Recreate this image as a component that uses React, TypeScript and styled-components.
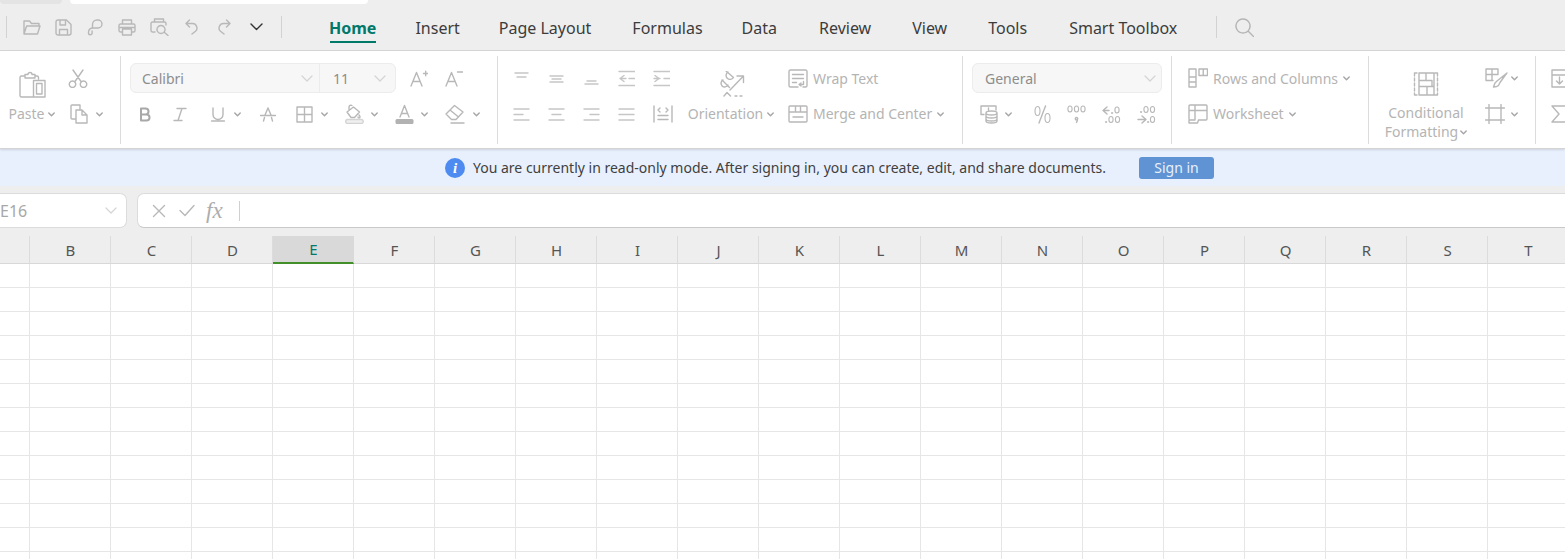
import React from "react";
import styled, { createGlobalStyle } from "styled-components";

const Global = createGlobalStyle`
  html, body { margin: 0; padding: 0; background: #fff; overflow: hidden; }
  body { font-family: "Noto Sans", "Open Sans", sans-serif; width: 1565px; height: 559px; }
  * { box-sizing: border-box; }
`;

const Page = styled.div`
  width: 1565px; height: 559px; overflow: hidden; display: flex; flex-direction: column; background: #fff;
`;
const TabStrip = styled.div`
  height: 4px; background: #eeeeee; display: flex; flex: none;
`;
const DocTab = styled.div<{ $active?: boolean; $w: number; $ml: number }>`
  width: ${p => p.$w}px; margin-left: ${p => p.$ml}px; height: 4px;
  border-radius: 0 0 6px 6px; background: ${p => (p.$active ? "#fff" : "#e4e4e4")};
`;
const MenuBar = styled.div`
  height: 47px; flex: none; background: #eeeeee; border-bottom: 1px solid #d6d6d6;
  display: flex; align-items: center; padding-left: 6px; position: relative;
`;
const BarSep = styled.div<{ $ml: number }>`
  width: 1px; height: 22px; background: #d2d2d2; margin-left: ${p => p.$ml}px; flex: none;
`;
const Slot = styled.div<{ $ml?: number; $w?: number }>`
  display: flex; align-items: center; flex: none;
  margin-left: ${p => p.$ml ?? 0}px;
  ${p => (p.$w ? `width: ${p.$w}px;` : "")}
`;
const Tabs = styled.div`
  display: flex; margin-left: 47px; height: 100%; align-items: center; padding-top: 2px;
`;
const Tab = styled.div<{ $active?: boolean; $ml: number }>`
  margin-left: ${p => p.$ml}px; font-size: 16px; line-height: 22px; white-space: nowrap; position: relative;
  color: ${p => (p.$active ? "#00786a" : "#3c3c3c")};
  font-weight: ${p => (p.$active ? 700 : 400)};
  ${p => (p.$active ? `&::after { content: ""; position: absolute; left: 1px; right: 0; bottom: -4px; height: 2px; background: #007a68; }` : "")}
`;
const Ribbon = styled.div`
  height: 98px; flex: none; background: #fff; display: flex; padding-top: 5px;
  border-bottom: 1px solid #d4d4d4; box-shadow: 0 1px 2px rgba(0,0,0,.12); position: relative; z-index: 1;
`;
const Group = styled.div<{ $w: number; $pl: number; $last?: boolean }>`
  width: ${p => p.$w}px; height: 88px; flex: none; display: flex; padding: 7px 0 0 ${p => p.$pl}px;
  ${p => (p.$last ? "" : "border-right: 1px solid #dcdcdc;")}
`;
const Stack = styled.div<{ $ml?: number }>`
  display: flex; flex-direction: column; gap: 6px; flex: none; margin-left: ${p => p.$ml ?? 0}px;
`;
const Row = styled.div<{ $pl?: number }>`
  height: 30px; display: flex; align-items: center; flex: none; padding-left: ${p => p.$pl ?? 0}px;
`;
const BigCol = styled.div<{ $w: number; $ml?: number; $pt?: number }>`
  width: ${p => p.$w}px; margin-left: ${p => p.$ml ?? 0}px; flex: none;
  display: flex; flex-direction: column; align-items: center; padding-top: ${p => p.$pt ?? 8}px;
`;
const Label = styled.span<{ $size?: number }>`
  font-size: ${p => p.$size ?? 14}px; line-height: 20px; color: #b4b4b4; white-space: nowrap;
`;
const BigLabel = styled(Label)<{ $mt?: number }>`
  display: flex; align-items: center; margin-top: ${p => p.$mt ?? 6}px;
`;
const SelectBox = styled.div`
  height: 30px; display: flex; background: #f7f7f7; border: 1px solid #ececec; border-radius: 6px; flex: none;
`;
const SelectCell = styled.div<{ $w: number; $div?: boolean; $pl: number; $pr: number }>`
  width: ${p => p.$w}px; display: flex; align-items: center; justify-content: space-between;
  padding: 0 ${p => p.$pr}px 0 ${p => p.$pl}px; font-size: 14px; color: #8d8d8d;
  ${p => (p.$div ? "border-right: 1px solid #ececec;" : "")}
`;
const AlignGrid = styled.div`
  display: grid; grid-template-columns: repeat(5, 17px); grid-auto-rows: 30px; column-gap: 18px; row-gap: 6px;
  flex: none; align-items: center;
`;
const IconLine = styled.div`
  height: 30px; display: flex; align-items: center; gap: 5px; flex: none;
  &:first-child > span { padding-top: 2px; }
`;
const Notice = styled.div`
  height: 37px; flex: none; background: #e9f0fd; display: flex; align-items: center; padding-left: 445px;
`;
const NoticeText = styled.span`
  font-size: 14px; color: #404040; margin-left: 8px; white-space: nowrap; width: 634px;
`;
const InfoDot = styled.div`
  width: 20px; height: 20px; border-radius: 50%; background: #4d8bf0; color: #fff; flex: none;
  font: italic 700 15px/20px "Liberation Serif", serif; text-align: center;
`;
const SignIn = styled.button`
  width: 75px; height: 22px; margin-left: 32px; border: none; border-radius: 3px; background: #5f93d3; color: #e8f0fa;
  font: 14px/22px "Noto Sans", sans-serif; padding: 0;
`;
const FormulaBar = styled.div`
  height: 50px; flex: none; background: #eeeeee; display: flex; padding-top: 7px; align-items: flex-start;
`;
const NameBox = styled.div`
  width: 127px; height: 35px; background: #fff; border: 1px solid #dcdcdc; border-left: none; border-radius: 0 7px 7px 0;
  display: flex; align-items: center; justify-content: space-between; padding-right: 9px; color: #a8a8a8; font-size: 16px; flex: none;
`;
const FormulaBox = styled.div`
  width: 1440px; height: 35px; margin-left: 10px; background: #fff; border: 1px solid #dcdcdc; border-bottom-color: #c9c9c9;
  border-radius: 7px 0 0 7px; display: flex; align-items: center; padding-left: 14px; flex: none;
`;
const Fx = styled.span`
  font: italic 23px/24px "Liberation Serif", serif; color: #adadad; margin-left: 11px; width: 18px;
`;
const InputSep = styled.div`
  width: 1px; height: 20px; background: #d0d0d0; margin-left: 15px;
`;
const HeaderRow = styled.div`
  display: flex; height: 28px; flex: none; background: #eeeeee;
`;
const ColHead = styled.div<{ $w: number; $active?: boolean }>`
  width: ${p => p.$w}px; flex: none; height: 28px; display: flex; align-items: center; justify-content: center;
  font-size: 15px; padding-left: 1px;
  color: ${p => (p.$active ? "#00786a" : "#555")};
  background: ${p => (p.$active ? "#d9d9d9" : "transparent")};
  border-right: 1px solid ${p => (p.$active ? "#d9d9d9" : "#dcdcdc")};
  border-bottom: ${p => (p.$active ? "2px solid #43902a" : "1px solid #d8d8d8")};
`;
const CellRow = styled.div`
  display: flex; height: 24px; flex: none;
`;
const Cell = styled.div<{ $w: number }>`
  width: ${p => p.$w}px; height: 24px; flex: none; border-right: 1px solid #e6e6e6; border-bottom: 1px solid #e6e6e6;
`;
const Svg = styled.svg`
  display: block; flex: none; fill: none; stroke: #b8b8b8; stroke-width: 1.4; stroke-linecap: round; stroke-linejoin: round;
`;

type IP = { w: number; h: number; d?: string; stroke?: string; sw?: number; children?: React.ReactNode };
const I = ({ w, h, d, stroke, sw, children }: IP) => (
  <Svg width={w} height={h} viewBox={`0 0 ${w} ${h}`} style={stroke || sw ? { stroke, strokeWidth: sw } : undefined}>
    {d && <path d={d} />}
    {children}
  </Svg>
);
const Caret = ({ ml = 4 }: { ml?: number }) => (
  <Slot $ml={ml}>
    <I w={7} h={5} d="M.8 1 3.5 3.8 6.2 1" stroke="#a6a6a6" />
  </Slot>
);
const Chev = () => <I w={12} h={7} d="M1 1l5 5 5-5" stroke="#d4d4d4" sw={1.2} />;
const Oval = ({ x, y }: { x: number; y: number }) => <ellipse cx={x} cy={y} rx={2.1} ry={3} style={{ strokeWidth: 1.1 }} />;
const Dot = ({ x, y }: { x: number; y: number }) => <circle cx={x} cy={y} r={0.7} style={{ fill: "#b8b8b8", strokeWidth: 0.6 }} />;

const Folder = () => <I w={18} h={16} d="M1 15V2h5.500l2 2.500H16V7M1 15h13.500L17 7H3.600L1 15Z" />;
const Save = () => <I w={17} h={17} d="M1 3a2 2 0 0 1 2-2h8.500L16 5.500V14a2 2 0 0 1-2 2H3a2 2 0 0 1-2-2V3ZM5 1v5h5.500V1M4.500 16v-5.500h8V16" />;
const Share = () => <I w={16} h={17} d="M5.500 8V5.500A4.500 4.500 0 0 1 10 1h1a3.800 3.800 0 0 1 0 8H6a4.500 4.500 0 0 0-4.500 4v1a1.800 1.800 0 1 0 3.600 0v-2" />;
const Printer = () => <I w={18} h={17} d="M4.500 5V1h9v4M4 13H2.500A1.500 1.500 0 0 1 1 11.500v-5A1.500 1.500 0 0 1 2.500 5h13A1.500 1.500 0 0 1 17 6.500v5a1.500 1.500 0 0 1-1.500 1.500H14M4.500 10h9v6h-9ZM1 8.500h16" />;
const Preview = () => <I w={19} h={18} d="M4.500 4V1h9v3M3 14H2.500A1.500 1.500 0 0 1 1 12.500v-7A1.500 1.500 0 0 1 2.500 4h12A1.500 1.500 0 0 1 16 5.500V7M5 14H4M11 7.500a4 4 0 1 0 .01 0ZM14 14l4 3.500" />;
const Undo = () => <I w={13} h={16} d="M4.500 1 1 4.500 4.500 8M1 4.500h6.500a4.500 4.500 0 0 1 3 7.800L7 15" />;
const Redo = () => <I w={13} h={16} d="M8.500 1 12 4.500 8.500 8M12 4.500H5.500a4.500 4.500 0 0 0-3 7.800L6 15" />;
const Search = () => <I w={19} h={19} d="M8 1a7 7 0 1 0 .01 0ZM13 13l5.500 5.500" stroke="#b4b4b4" />;
const Clip = () => (
  <I w={27} h={27} d="M6 5H2.500A1.500 1.500 0 0 0 1 6.500v18A1.500 1.500 0 0 0 2.500 26h12M16 5h2a1.500 1.500 0 0 1 1.500 1.500V8M6 3.500h3a2 2 0 0 1 4 0h3V7H6ZM14.500 9.500h11.500V26H14.500ZM17.500 12.500h5.500v10.500h-5.500Z" />
);
const Scissors = () => <I w={20} h={19} d="M5 1l8 11.500M15 1 7 12.500M4.500 12a3.200 3.200 0 1 0 .01 0ZM15.500 12a3.200 3.200 0 1 0 .01 0Z" />;
const Copy = () => <I w={18} h={20} d="M6 15H2a1 1 0 0 1-1-1V2a1 1 0 0 1 1-1h8v4M6 6h6l5 5v8H6ZM12 6v5h5" />;
const Bold = () => <I w={12} h={15} d="M2 1.500h4.500a3 3 0 0 1 0 6H2ZM2 7.500h5.500a3 3 0 0 1 0 6H2Z" stroke="#a8a8a8" sw={2} />;
const Italic = () => <I w={14} h={15} d="M4 1.500h9M9 1.500 5 13.500M1 13.500h8" />;
const Under = () => <I w={14} h={15} d="M2 1v6.500a5 5 0 0 0 10 0V1M.5 14h13" />;
const Strike = () => <I w={16} h={15} d="M8 1 5 8M8 1l3 7M.5 8.500h15M3.500 14l1-3.500M12.500 14l-1-3.500" />;
const Borders = () => <I w={17} h={17} d="M1 1h15v15H1ZM8.500 1v15M1 8.500h15" />;
const Fill = () => (
  <Svg width={19} height={20} viewBox="0 0 19 20">
    <path d="M2 8 8.500 3l6 5-5 5.500H6L2 8ZM4 5.500V3a2 2 0 0 1 3-1.500M14 11c.8.900 1 1.400 1 2a1 1 0 0 1-2 0" />
    <rect x=".7" y="15.500" width="17.500" height="4" rx="2" style={{ fill: "#f0f0f0", stroke: "#d4d4d4" }} />
  </Svg>
);
const FontColor = () => (
  <Svg width={19} height={20} viewBox="0 0 19 20">
    <path d="M5 13 9.500 1.500 14 13M6.500 9.500h6" />
    <rect x=".5" y="15" width="18" height="5" rx="1.500" style={{ fill: "#b2b2b2", stroke: "none" }} />
  </Svg>
);
const Eraser = () => <I w={20} h={20} d="M1 10 9.500 1.500 18 8l-7 7.500H6.500L1 10ZM5 6l8.500 7M6 19h13" />;
const ln = (a: [number, number, number][]) => a.map(([x1, x2, y]) => `M${x1} ${y}H${x2}`).join("");
const Lines = ({ a }: { a: [number, number, number][] }) => <I w={17} h={17} d={ln(a)} stroke="#c6c6c6" />;
const IndentL = () => <I w={17} h={17} d="M1 1.500h16M1 15.500h16M6 5.500 2 8.500l4 3M2 8.500h6M11 8.500h6" stroke="#c6c6c6" />;
const IndentR = () => <I w={17} h={17} d="M1 1.500h16M1 15.500h16M2 5.500 6 8.500l-4 3M1 8.500h6M11 8.500h6" stroke="#c6c6c6" />;
const Distrib = () => <I w={20} h={18} d="M1 1v16M19 1v16M7 3 5 5l2 2M13 3l2 2-2 2M5 10.500h10M5 14.500h10" />;
const Orient = () => (
  <I w={28} h={26} d="M11 1a4 4 0 1 0 5.500 5.500L9 0M6 9a3.700 3.700 0 1 0 5 5M5 9l7.500 7.500M13 19 26 5.500M20 5h6.500v6.500M7 25l3-3.500 3.500 3.500M18 25h2M23 25h2" />
);
const Wrap = () => <I w={20} h={19} d="M15 18h2.500a1.500 1.500 0 0 0 1.500-1.500v-14A1.500 1.500 0 0 0 17.500 1h-15A1.500 1.500 0 0 0 1 2.500v14A1.500 1.500 0 0 0 2.500 18H10M4.500 5.500h11M4.500 9.500h11M4.500 13.500h4M15.500 12.500v3h-4M13 14l-2 1.500 2 1.500" />;
const Merge = () => <I w={20} h={18} d="M2 1h16a1 1 0 0 1 1 1v14a1 1 0 0 1-1 1H2a1 1 0 0 1-1-1V2a1 1 0 0 1 1-1ZM1 7h18M7.500 1v6M12.500 1v6M5 12h10" />;
const Money = () => <I w={19} h={19} d="M4 9.500H1V1h15v4M8.500 3v2M6 8c0-1 2-2 5.500-2S17 7 17 8s-2 2-5.500 2S6 9 6 8ZM6 8v8c0 1 2 2 5.500 2s5.500-1 5.500-2V8M6 11c0 1 2 2 5.500 2S17 12 17 11M6 14c0 1 2 2 5.500 2s5.500-1 5.500-2" />;
const Percent = () => (
  <I w={17} h={19} d="M11.500 1 5 18">
    <ellipse cx="3.500" cy="6" rx="2.500" ry="4.500" style={{ strokeWidth: 1.1 }} />
    <ellipse cx="13.500" cy="13" rx="2.500" ry="4.500" style={{ strokeWidth: 1.1 }} />
  </I>
);
const Thousand = () => (
  <I w={19} h={19} d="M9.500 12.500a1.200 1.200 0 1 0 .01 0ZM10.500 14c0 1.500-.3 2.300-1 3.500">
    <Oval x={3} y={4} /><Oval x={9.5} y={4} /><Oval x={16} y={4} />
  </I>
);
const DecL = () => (
  <I w={19} h={19} d="M5 2 1 5.500 5 9M1 5.500h6">
    <Dot x={10} y={8} /><Oval x={15} y={5} />
    <Dot x={4} y={17} /><Oval x={9} y={14.500} /><Oval x={15.500} y={14.500} />
  </I>
);
const DecR = () => (
  <I w={19} h={19} d="M5 11l4 3.500L5 18M1 14.500h7">
    <Dot x={4} y={7} /><Oval x={9} y={4.500} /><Oval x={15.500} y={4.500} />
    <Dot x={11} y={17} /><Oval x={15.500} y={14.500} />
  </I>
);
const RowsCols = () => <I w={20} h={20} d="M1 1h7v8H1ZM1 9h7v5H1ZM1 14h7v5H1ZM11 1h8.500v6.500H11ZM15.250 1v6.500" />;
const Sheet = () => <I w={20} h={20} d="M7 16H2a1 1 0 0 1-1-1V2a1 1 0 0 1 1-1h16a1 1 0 0 1 1 1v13a1 1 0 0 1-1 1h-7M1 6.500h18M7 1v15M1 16v3h8.500l1-3" />;
const CondFmt = () => <I w={26} h={24} d="M1.500 1v3M1.500 6v3M1.500 11v3M1.500 16v3M1.500 21v2M24.500 1v3M24.500 6v3M24.500 11v3M24.500 16v3M24.500 21v2M1.500 1H4M1.500 23H4M22 1h2.500M22 23h2.500M6 1h15v22H6ZM6 8.500h13M13 1v7.500M19 8.500v6M6 14.500h15M14 14.500V23" />;
const Brush = () => <I w={24} h={21} d="M8 12.500H1V1h12v5M1 6.500h12M7 1v11.500M22 5 12 13M12 13l-2 2c-.5 1-1 3-1.500 4 1.500 0 4-.5 5-1.500l1.500-3 6.500-9" />;
const Frame = () => <I w={20} h={20} d="M4 .5v19M16 .5v19M.5 4h19M.5 16h19" />;
const DownBox = () => <I w={16} h={19} d="M16 1H1v17h15M1 6h15M8.500 8v7M5.500 12l3 3 3-3" />;
const Sigma = () => <I w={16} h={18} d="M15 1H1l7 8-7 8h14" />;
const Cross = () => <I w={14} h={14} d="M1.500 1.500l11 11M12.500 1.500l-11 11" stroke="#b8b8b8" />;
const Check = () => <I w={16} h={13} d="M1 6.500 6 11.500 15 1.500" stroke="#b8b8b8" />;

const tabs: [string, number][] = [
  ["Insert", 39], ["Page Layout", 39], ["Formulas", 41], ["Data", 39], ["Review", 42],
  ["View", 41], ["Tools", 41], ["Smart Toolbox", 42],
];
const cols = ["B","C","D","E","F","G","H","I","J","K","L","M","N","O","P","Q","R","S","T"];

export default function App() {
  return (
    <Page>
      <Global />
      <TabStrip>
        <DocTab $w={62} $ml={0} />
        <DocTab $active $w={298} $ml={8} />
      </TabStrip>
      <MenuBar>
        <BarSep $ml={0} />
        <Slot $ml={16}><Folder /></Slot>
        <Slot $ml={14}><Save /></Slot>
        <Slot $ml={15}><Share /></Slot>
        <Slot $ml={15}><Printer /></Slot>
        <Slot $ml={14}><Preview /></Slot>
        <Slot $ml={16}><Undo /></Slot>
        <Slot $ml={20}><Redo /></Slot>
        <Slot $ml={19}><I w={13} h={8} d="M1 1l5.500 5.500L12 1" stroke="#333" /></Slot>
        <BarSep $ml={18} />
        <Tabs>
          <Tab $active $ml={0}>Home</Tab>
          {tabs.map(([t, m]) => <Tab key={t} $ml={m}>{t}</Tab>)}
        </Tabs>
        <BarSep $ml={39} />
        <Slot $ml={18}><Search /></Slot>
      </MenuBar>
      <Ribbon>
        <Group $w={121} $pl={8}>
          <BigCol $w={48}>
            <Clip />
            <BigLabel $mt={6}>Paste<Caret /></BigLabel>
          </BigCol>
          <Stack $ml={12}>
            <Row><Scissors /></Row>
            <Row $pl={2}><Copy /><Caret ml={8} /></Row>
          </Stack>
        </Group>
        <Group $w={377} $pl={9}>
          <Stack>
            <Row>
              <SelectBox>
                <SelectCell $w={189} $div $pl={11} $pr={6}>Calibri<Chev /></SelectCell>
                <SelectCell $w={75} $pl={13} $pr={9}>11<Chev /></SelectCell>
              </SelectBox>
              <Slot $ml={14}>
                <I w={18} h={18} d="M1 17 6.500 3.500 12 17M3 12.500h7M13.500 4.500h4.500M15.700 2.300v4.500" />
              </Slot>
              <Slot $ml={17}>
                <I w={18} h={18} d="M1 17 6.500 3.500 12 17M3 12.500h7M12.500 3h5.500" />
              </Slot>
            </Row>
            <Row $pl={9}>
              <Bold />
              <Slot $ml={22}><Italic /></Slot>
              <Slot $ml={24}><Under /><Caret ml={9} /></Slot>
              <Slot $ml={19}><Strike /></Slot>
              <Slot $ml={20}><Borders /><Caret ml={8} /></Slot>
              <Slot $ml={17}><Fill /><Caret ml={7} /></Slot>
              <Slot $ml={17}><FontColor /><Caret ml={7} /></Slot>
              <Slot $ml={17}><Eraser /><Caret ml={8} /></Slot>
            </Row>
          </Stack>
        </Group>
        <Group $w={465} $pl={15}>
          <AlignGrid>
            <Lines a={[[2, 15, 3], [4, 13, 7]]} />
            <Lines a={[[2, 15, 6], [4, 13, 9], [2, 15, 12]]} />
            <Lines a={[[4, 13, 11], [2, 15, 14]]} />
            <IndentL />
            <IndentR />
            <Lines a={[[1, 16, 3], [1, 10, 8.5], [1, 16, 14]]} />
            <Lines a={[[1, 16, 3], [4, 13, 8.5], [1, 16, 14]]} />
            <Lines a={[[1, 16, 3], [7, 16, 8.5], [1, 16, 14]]} />
            <Lines a={[[1, 16, 3], [1, 16, 8.5], [1, 16, 14]]} />
            <Distrib />
          </AlignGrid>
          <BigCol $w={88} $ml={17} $pt={8}>
            <Orient />
            <BigLabel $mt={7}>Orientation<Caret /></BigLabel>
          </BigCol>
          <Stack $ml={13}>
            <IconLine><Wrap /><Label>Wrap Text</Label></IconLine>
            <IconLine><Merge /><Label>Merge and Center</Label><Caret ml={0} /></IconLine>
          </Stack>
        </Group>
        <Group $w={209} $pl={9}>
          <Stack>
            <Row>
              <SelectBox>
                <SelectCell $w={188} $pl={12} $pr={5}>General<Chev /></SelectCell>
              </SelectBox>
            </Row>
            <Row $pl={8}>
              <Money /><Caret ml={6} />
              <Slot $ml={22}><Percent /></Slot>
              <Slot $ml={16}><Thousand /></Slot>
              <Slot $ml={16}><DecL /></Slot>
              <Slot $ml={16}><DecR /></Slot>
            </Row>
          </Stack>
        </Group>
        <Group $w={197} $pl={16}>
          <Stack>
            <IconLine><RowsCols /><Label>Rows and Columns</Label><Caret ml={0} /></IconLine>
            <IconLine><Sheet /><Label>Worksheet</Label><Caret ml={0} /></IconLine>
          </Stack>
        </Group>
        <Group $w={167} $pl={15}>
          <BigCol $w={84} $pt={9}>
            <CondFmt />
            <BigLabel $mt={7}>Conditional</BigLabel>
            <BigLabel $mt={-1}>Formatting<Caret ml={2} /></BigLabel>
          </BigCol>
          <Stack $ml={17}>
            <Row><Brush /><Caret ml={2} /></Row>
            <Row><Frame /><Caret ml={6} /></Row>
          </Stack>
        </Group>
        <Group $w={29} $pl={15} $last>
          <Stack>
            <Row><DownBox /></Row>
            <Row><Sigma /></Row>
          </Stack>
        </Group>
      </Ribbon>
      <Notice>
        <InfoDot>i</InfoDot>
        <NoticeText>You are currently in read-only mode. After signing in, you can create, edit, and share documents.</NoticeText>
        <SignIn>Sign in</SignIn>
      </Notice>
      <FormulaBar>
        <NameBox>E16<Chev /></NameBox>
        <FormulaBox>
          <Cross />
          <Slot $ml={13}><Check /></Slot>
          <Fx>fx</Fx>
          <InputSep />
        </FormulaBox>
      </FormulaBar>
      <HeaderRow>
        <ColHead $w={30} />
        {cols.map(c => <ColHead key={c} $w={81} $active={c === "E"}>{c}</ColHead>)}
      </HeaderRow>
      {Array.from({ length: 13 }, (_, r) => (
        <CellRow key={r}>
          <Cell $w={30} />
          {cols.map(c => <Cell key={c} $w={81} />)}
        </CellRow>
      ))}
    </Page>
  );
}
